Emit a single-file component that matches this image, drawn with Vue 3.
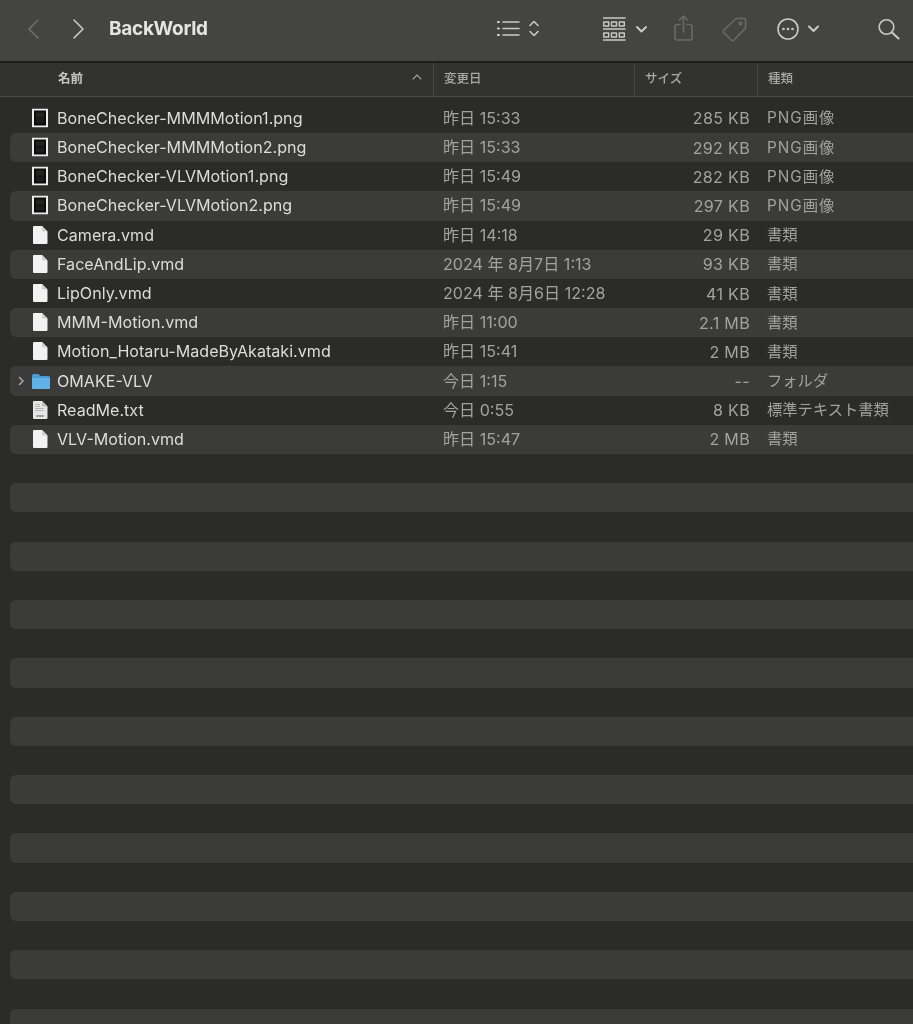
<script setup>
const files = [
  { name: 'BoneChecker-MMMMotion1.png', date: '昨日 15:33', size: '285 KB', kind: 'PNG画像', icon: 'img' },
  { name: 'BoneChecker-MMMMotion2.png', date: '昨日 15:33', size: '292 KB', kind: 'PNG画像', icon: 'img' },
  { name: 'BoneChecker-VLVMotion1.png', date: '昨日 15:49', size: '282 KB', kind: 'PNG画像', icon: 'img' },
  { name: 'BoneChecker-VLVMotion2.png', date: '昨日 15:49', size: '297 KB', kind: 'PNG画像', icon: 'img' },
  { name: 'Camera.vmd', date: '昨日 14:18', size: '29 KB', kind: '書類', icon: 'doc' },
  { name: 'FaceAndLip.vmd', date: '2024 年 8月7日 1:13', size: '93 KB', kind: '書類', icon: 'doc' },
  { name: 'LipOnly.vmd', date: '2024 年 8月6日 12:28', size: '41 KB', kind: '書類', icon: 'doc' },
  { name: 'MMM-Motion.vmd', date: '昨日 11:00', size: '2.1 MB', kind: '書類', icon: 'doc' },
  { name: 'Motion_Hotaru-MadeByAkataki.vmd', date: '昨日 15:41', size: '2 MB', kind: '書類', icon: 'doc' },
  { name: 'OMAKE-VLV', date: '今日 1:15', size: '--', kind: 'フォルダ', icon: 'folder' },
  { name: 'ReadMe.txt', date: '今日 0:55', size: '8 KB', kind: '標準テキスト書類', icon: 'txt' },
  { name: 'VLV-Motion.vmd', date: '昨日 15:47', size: '2 MB', kind: '書類', icon: 'doc' },
]
const blanks = Array.from({ length: 20 }, (_, i) => i)
</script>

<template>
  <div class="window">
    <header class="toolbar">
      <svg class="ic back" width="16" height="22" viewBox="0 0 16 22"><path d="M13 2 4 11l9 9" /></svg>
      <svg class="ic forward" width="16" height="22" viewBox="0 0 16 22"><path d="M3 2l9 9-9 9" /></svg>
      <h1 class="title">BackWorld</h1>
      <svg class="ic t-list" width="44" height="22" viewBox="0 0 44 22">
        <g class="thin">
          <path d="M6 4h16M6 10.500h16M6 17h16" />
          <path d="M.8 4h1.200M.8 10.500h1.200M.8 17h1.200" class="dots" />
          <path d="M33 7.500l4-4 4 4M33 13.500l4 4 4-4" />
        </g>
      </svg>
      <svg class="ic t-grid" width="46" height="24" viewBox="0 0 46 24">
        <g class="grid">
          <path d="M0 1h22M0 12h22M0 23h22" />
          <rect x=".7" y="5" width="5" height="4" /><rect x="8.500" y="5" width="5" height="4" /><rect x="16.300" y="5" width="5" height="4" />
          <rect x=".7" y="16" width="5" height="4" /><rect x="8.500" y="16" width="5" height="4" /><rect x="16.300" y="16" width="5" height="4" />
        </g>
        <path class="chev" d="M34 10l4.500 4.500L43 10" />
      </svg>
      <svg class="ic t-share dim" width="20" height="26" viewBox="0 0 20 26">
        <path d="M6 9.500H3a2 2 0 0 0-2 2V23a2 2 0 0 0 2 2h13a2 2 0 0 0 2-2V11.500a2 2 0 0 0-2-2h-3M9.500 17V1.500M5.500 5l4-4 4 4" />
      </svg>
      <svg class="ic t-tag dim" width="26" height="26" viewBox="0 0 26 26">
        <path d="M14 2.500h7.500a2 2 0 0 1 2 2V12L12 24a2 2 0 0 1-2.800 0L2 16.800a2 2 0 0 1 0-2.800z" />
        <circle cx="18.500" cy="7.500" r="1.300" />
      </svg>
      <svg class="ic t-more" width="44" height="24" viewBox="0 0 44 24">
        <circle cx="11" cy="12" r="10" class="ring" />
        <circle cx="6.500" cy="12" r="1.300" class="fill" /><circle cx="11" cy="12" r="1.300" class="fill" /><circle cx="15.500" cy="12" r="1.300" class="fill" />
        <path class="chev" d="M32 9.500l4.500 4.500 4.500-4.500" />
      </svg>
      <svg class="ic t-search" width="24" height="22" viewBox="0 0 24 22">
        <circle cx="8.500" cy="9" r="7.300" class="ring" />
        <path class="chev" d="M14 14.500l6.500 6" />
      </svg>
    </header>

    <div class="columns">
      <div class="col c-name">
        <span class="strong">名前</span>
        <svg class="sort" width="10" height="6" viewBox="0 0 10 6"><path d="M.7 5.300 5 1l4.300 4.300" /></svg>
      </div>
      <div class="col c-date">変更日</div>
      <div class="col c-size">サイズ</div>
      <div class="col c-kind">種類</div>
    </div>

    <main class="list">
      <div v-for="f in files" :key="f.name" class="row">
        <div class="cell c-name name">
          <svg v-if="f.icon === 'folder'" class="disclosure" width="7" height="10" viewBox="0 0 7 10"><path d="M1 1l4 4-4 4" /></svg>
          <svg v-if="f.icon === 'img'" class="file" width="16" height="19" viewBox="0 0 16 19">
            <rect x="0" y="0" width="16" height="19" fill="#ededed" />
            <rect x="2" y="2" width="12" height="15" fill="#0c0c0c" />
            <rect x="4" y="4" width="8" height="5" fill="#222221" />
            <rect x="4" y="10" width="8" height="5" fill="#1c1c1c" />
          </svg>
          <svg v-else-if="f.icon === 'doc'" class="file" width="16" height="19" viewBox="0 0 16 19">
            <path d="M1 1.500A1 1 0 0 1 2 .5h8l5.500 5.500v11.500a1 1 0 0 1-1 1H2a1 1 0 0 1-1-1z" fill="#f2f2f2" />
            <path d="M10 .5 15.500 6H11a1 1 0 0 1-1-1z" fill="#cfcfcf" />
          </svg>
          <svg v-else-if="f.icon === 'txt'" class="file" width="16" height="19" viewBox="0 0 16 19">
            <path d="M1 1.500A1 1 0 0 1 2 .5h8l5.500 5.500v11.500a1 1 0 0 1-1 1H2a1 1 0 0 1-1-1z" fill="#e6e6e6" />
            <path d="M10 .5 15.500 6H11a1 1 0 0 1-1-1z" fill="#c0c0c0" />
            <path d="M3 4h5M3 6h5M3 8h9M3 10h9" stroke="#a8a8a8" stroke-width=".8" />
            <path d="M4.500 15.500h7" stroke="#666" stroke-width="1.500" stroke-dasharray="2 .6" />
          </svg>
          <svg v-else class="file folder" width="20" height="16" viewBox="0 0 20 16">
            <path d="M1 2.500A1.500 1.500 0 0 1 2.500 1h5l2 2h8A1.500 1.500 0 0 1 19 4.500v10a1.500 1.500 0 0 1-1.500 1.500h-15A1.500 1.500 0 0 1 1 14.500z" fill="#4a9bd8" />
            <path d="M1 5h18v9.500a1.500 1.500 0 0 1-1.500 1.500h-15A1.500 1.500 0 0 1 1 14.500z" fill="#62b2ea" />
          </svg>
          <span class="label">{{ f.name }}</span>
        </div>
        <div class="cell c-date">{{ f.date }}</div>
        <div class="cell c-size">{{ f.size }}</div>
        <div class="cell c-kind" :class="{ latin: f.icon === 'img' }">{{ f.kind }}</div>
      </div>
      <div v-for="b in blanks" :key="b" class="row" />
    </main>
  </div>
</template>

<style>
html, body { margin: 0; background: #2b2b2a; overflow: hidden; }
</style>

<style scoped>
.window {
  width: 913px;
  height: 1024px;
  overflow: hidden;
  background: #2b2b2a;
  font-family: "Inter", "Noto Sans CJK JP", sans-serif;
  filter: blur(0.35px);
}
.toolbar {
  height: 57px;
  padding-bottom: 4px;
  background: #444443;
  border-bottom: 2px solid #1d1d1c;
  display: flex;
  align-items: center;
  box-sizing: content-box;
}
.ic { flex: none; fill: none; stroke: #c9c9c8; stroke-width: 1.600; }
.ic path, .ic circle, .ic rect { stroke-linecap: round; stroke-linejoin: round; }
.back { margin-left: 25px; stroke: #6e6e6d; }
.forward { margin-left: 30px; }
.title {
  margin: 0 0 0 22px;
  font-size: 19px;
  font-weight: 700;
  letter-spacing: -0.3px;
  color: #e4e4e3;
  width: 300px;
  flex: none;
}
.t-list { margin-left: 88px; }
.t-grid { margin-left: 62px; }
.t-share { margin-left: 25px; margin-bottom: 2px; }
.t-tag { margin-left: 28px; }
.t-more { margin-left: 29px; }
.t-search { margin-left: 57px; }
.dim { stroke: #696968; }
.grid rect { stroke-width: 1.400; }
.grid path { stroke-width: 1.600; }
.fill { fill: #c9c9c8; stroke: none; }
.dots { stroke-width: 2; }
.chev { stroke-width: 2; }
.columns {
  height: 33px;
  background: #323231;
  border-bottom: 1px solid #4a4a49;
  display: grid;
  grid-template-columns: 433px 201px 123px 1fr;
  font-size: 12.500px;
  font-weight: 500;
  color: #a8a8a7;
}
.col {
  display: flex;
  align-items: center;
  padding-left: 10px;
  padding-bottom: 5px;
  box-sizing: border-box;
  border-left: 1px solid #454544;
}
.col.c-name { padding-left: 58px; border-left: 0; justify-content: space-between; padding-right: 11px; }
.strong { color: #c6c6c5; font-weight: 700; }
.sort { fill: none; stroke: #a5a5a4; stroke-width: 1.200; }
.list { padding: 6.800px 0 0 10px; }
.row {
  height: 29.200px;
  display: grid;
  grid-template-columns: 423px 201px 123px 1fr;
  align-items: center;
  border-radius: 6px 0 0 6px;
  font-size: 16.100px;
  line-height: 20px;
  color: #a2a2a1;
}
.row:nth-child(even) { background: #3b3b3a; }
.cell { white-space: nowrap; }
.cell.c-date { padding-left: 10px; font-size: 16.100px; margin-top: -1px; }
.cell.c-size { text-align: right; padding-right: 7px; font-size: 16.100px; letter-spacing: 0.3px; }
.cell.c-kind { padding-left: 10px; font-size: 15.300px; }
.cell.c-kind.latin { letter-spacing: 1px; }
.name { position: relative; padding-left: 47px; color: #dcdcdb; margin-top: -1px; }
.file { position: absolute; left: 22px; top: 50%; transform: translateY(-50%); }
.folder { left: 21px; }
.disclosure { position: absolute; left: 8px; top: 50%; transform: translateY(-50%); fill: none; stroke: #a8a8a7; stroke-width: 1.500; }
</style>
